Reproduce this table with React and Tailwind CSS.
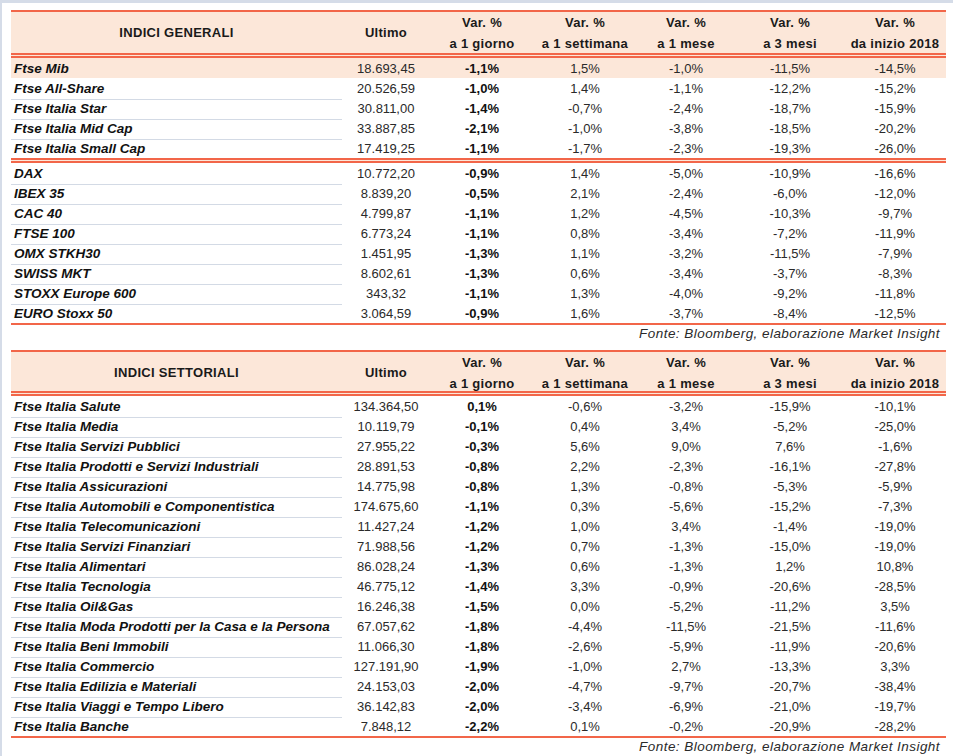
import React from 'react';

const RED = 'bg-[#f26649]';

const generali = [
  ['Ftse Mib', '18.693,45', '-1,1%', '1,5%', '-1,0%', '-11,5%', '-14,5%', true],
  ['Ftse All-Share', '20.526,59', '-1,0%', '1,4%', '-1,1%', '-12,2%', '-15,2%'],
  ['Ftse Italia Star', '30.811,00', '-1,4%', '-0,7%', '-2,4%', '-18,7%', '-15,9%'],
  ['Ftse Italia Mid Cap', '33.887,85', '-2,1%', '-1,0%', '-3,8%', '-18,5%', '-20,2%'],
  ['Ftse Italia Small Cap', '17.419,25', '-1,1%', '-1,7%', '-2,3%', '-19,3%', '-26,0%'],
];

const esteri = [
  ['DAX', '10.772,20', '-0,9%', '1,4%', '-5,0%', '-10,9%', '-16,6%'],
  ['IBEX 35', '8.839,20', '-0,5%', '2,1%', '-2,4%', '-6,0%', '-12,0%'],
  ['CAC 40', '4.799,87', '-1,1%', '1,2%', '-4,5%', '-10,3%', '-9,7%'],
  ['FTSE 100', '6.773,24', '-1,1%', '0,8%', '-3,4%', '-7,2%', '-11,9%'],
  ['OMX STKH30', '1.451,95', '-1,3%', '1,1%', '-3,2%', '-11,5%', '-7,9%'],
  ['SWISS MKT', '8.602,61', '-1,3%', '0,6%', '-3,4%', '-3,7%', '-8,3%'],
  ['STOXX Europe 600', '343,32', '-1,1%', '1,3%', '-4,0%', '-9,2%', '-11,8%'],
  ['EURO Stoxx 50', '3.064,59', '-0,9%', '1,6%', '-3,7%', '-8,4%', '-12,5%'],
];

const settoriali = [
  ['Ftse Italia Salute', '134.364,50', '0,1%', '-0,6%', '-3,2%', '-15,9%', '-10,1%'],
  ['Ftse Italia Media', '10.119,79', '-0,1%', '0,4%', '3,4%', '-5,2%', '-25,0%'],
  ['Ftse Italia Servizi Pubblici', '27.955,22', '-0,3%', '5,6%', '9,0%', '7,6%', '-1,6%'],
  ['Ftse Italia Prodotti e Servizi Industriali', '28.891,53', '-0,8%', '2,2%', '-2,3%', '-16,1%', '-27,8%'],
  ['Ftse Italia Assicurazioni', '14.775,98', '-0,8%', '1,3%', '-0,8%', '-5,3%', '-5,9%'],
  ['Ftse Italia Automobili e Componentistica', '174.675,60', '-1,1%', '0,3%', '-5,6%', '-15,2%', '-7,3%'],
  ['Ftse Italia Telecomunicazioni', '11.427,24', '-1,2%', '1,0%', '3,4%', '-1,4%', '-19,0%'],
  ['Ftse Italia Servizi Finanziari', '71.988,56', '-1,2%', '0,7%', '-1,3%', '-15,0%', '-19,0%'],
  ['Ftse Italia Alimentari', '86.028,24', '-1,3%', '0,6%', '-1,3%', '1,2%', '10,8%'],
  ['Ftse Italia Tecnologia', '46.775,12', '-1,4%', '3,3%', '-0,9%', '-20,6%', '-28,5%'],
  ['Ftse Italia Oil&Gas', '16.246,38', '-1,5%', '0,0%', '-5,2%', '-11,2%', '3,5%'],
  ['Ftse Italia Moda Prodotti per la Casa e la Persona', '67.057,62', '-1,8%', '-4,4%', '-11,5%', '-21,5%', '-11,6%'],
  ['Ftse Italia Beni Immobili', '11.066,30', '-1,8%', '-2,6%', '-5,9%', '-11,9%', '-20,6%'],
  ['Ftse Italia Commercio', '127.191,90', '-1,9%', '-1,0%', '2,7%', '-13,3%', '3,3%'],
  ['Ftse Italia Edilizia e Materiali', '24.153,03', '-2,0%', '-4,7%', '-9,7%', '-20,7%', '-38,4%'],
  ['Ftse Italia Viaggi e Tempo Libero', '36.142,83', '-2,0%', '-3,4%', '-6,9%', '-21,0%', '-19,7%'],
  ['Ftse Italia Banche', '7.848,12', '-2,2%', '0,1%', '-0,2%', '-20,9%', '-28,2%'],
];

const GRID = 'grid grid-cols-[331px_88px_104px_102px_100px_108px_102px]';

const HeaderRow = ({ title, height }) => (
  <div className={`${GRID} bg-[#fce7d9] font-bold text-[13px] tracking-[0.3px] text-[#1a1a1a] ${height}`}>
    <div className="flex items-center justify-center">{title}</div>
    <div className="flex items-center justify-center">Ultimo</div>
    {['a 1 giorno', 'a 1 settimana', 'a 1 mese', 'a 3 mesi', 'da inizio 2018'].map((l) => (
      <div key={l} className="flex flex-col items-center justify-center leading-[21px]">
        <span>Var. %</span>
        <span>{l}</span>
      </div>
    ))}
  </div>
);

const DoubleLine = () => (
  <div className="flex flex-col">
    <div className={`h-[2px] ${RED}`} />
    <div className="h-[1px] bg-[#fce7d9]" />
    <div className={`h-[2px] ${RED}`} />
  </div>
);

const Row = ({ r, last }) => (
  <div className={`${GRID} h-[20px] text-[13px] text-[#2a2a2a] ${r[7] ? 'bg-[#fce7d9]' : ''}`}>
    <div
      className={`flex items-center pl-[3px] pt-[1px] font-bold italic text-[13.5px] text-[#111] ${
        last || r[7] ? '' : 'border-b border-[#d3dae5]'
      }`}
    >
      {r[0]}
    </div>
    <div className="flex items-center justify-center">{r[1]}</div>
    <div className="flex items-center justify-center font-bold text-[#111]">{r[2]}</div>
    <div className="flex items-center justify-center">{r[3]}</div>
    <div className="flex items-center justify-center">{r[4]}</div>
    <div className="flex items-center justify-center">{r[5]}</div>
    <div className="flex items-center justify-center">{r[6]}</div>
  </div>
);

const Fonte = () => (
  <div className="h-[18px] flex items-center justify-end pr-[6px] italic text-[13.5px] tracking-[0.45px] text-[#2a2a2a]">
    Fonte: Bloomberg, elaborazione Market Insight
  </div>
);

export default function App() {
  return (
    <div
      className="w-[953px] h-[756px] overflow-hidden bg-white border-t-[3px] border-l-[2px] border-[#d5dce8] pl-[9px] pt-[7px]"
      style={{ fontFamily: '"Liberation Sans", Arial, sans-serif' }}
    >
      <div className="w-[935px]">
        {/* Indici generali */}
        <div className={`h-[2px] ${RED}`} />
        <HeaderRow title="INDICI GENERALI" height="h-[41px]" />
        <DoubleLine />
        {generali.map((r, i) => (
          <Row key={r[0]} r={r} last={i === generali.length - 1} />
        ))}
        <DoubleLine />
        {esteri.map((r, i) => (
          <Row key={r[0]} r={r} last={i === esteri.length - 1} />
        ))}
        <div className={`h-[2px] ${RED}`} />
        <Fonte />

        {/* Indici settoriali */}
        <div className="h-[7px]" />
        <div className={`h-[2px] ${RED}`} />
        <HeaderRow title="INDICI SETTORIALI" height="h-[39px]" />
        <DoubleLine />
        {settoriali.map((r, i) => (
          <Row key={r[0]} r={r} last={i === settoriali.length - 1} />
        ))}
        <div className={`h-[2px] ${RED}`} />
        <Fonte />
      </div>
    </div>
  );
}
